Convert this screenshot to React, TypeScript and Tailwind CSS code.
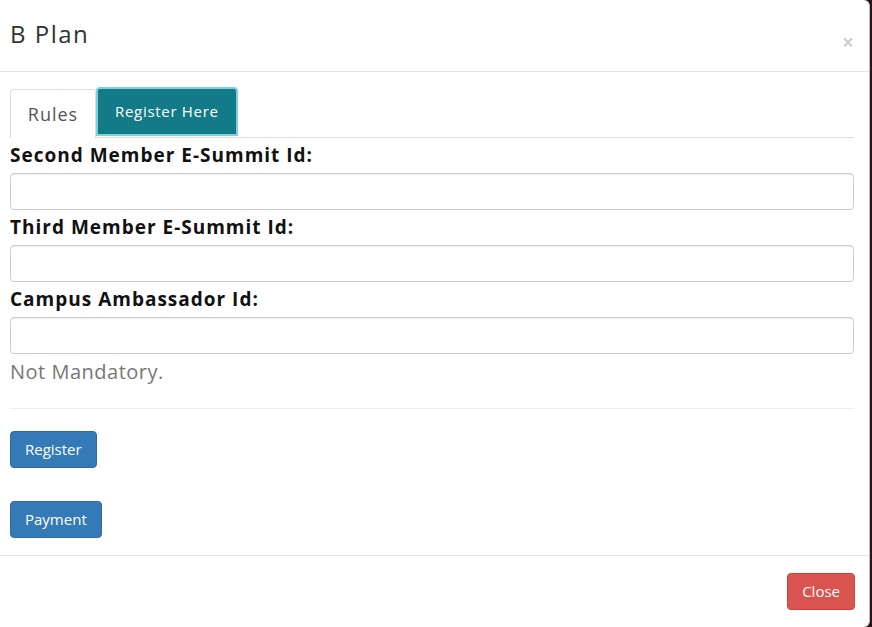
const fields = [
  { label: 'Second Member E-Summit Id:' },
  { label: 'Third Member E-Summit Id:' },
  { label: 'Campus Ambassador Id:' },
];

const App = () => {
  return (
    <div className="w-[872px] h-[627px] bg-[#2a1418] overflow-hidden font-['Open_Sans',sans-serif]">
      <div className="w-[870px] h-[627px] bg-white border-r border-[#bdbdbd] rounded-r-[6px] flex flex-col">
        {/* Header */}
        <div className="h-[72px] border-b border-[#e5e5e5] flex items-start justify-between pl-[10px] pr-[15px]">
          <h4 className="mt-[16px] text-[24px] text-[#333] tracking-[1.5px]">B Plan</h4>
          <span className="mt-[32px] text-[21px] font-bold leading-none text-black/20">×</span>
        </div>

        {/* Body */}
        <div className="px-[10px] pt-[16px] pr-[15px]">
          <div className="flex items-end border-b border-[#ddd] h-[50px]">
            <div className="h-[49px] w-[86px] border border-[#ddd] border-b-0 rounded-t-[4px] bg-white flex items-center justify-center text-[18px] tracking-[1px] text-[#555] -mb-px">
              Rules
            </div>
            <div className="h-[49px] mb-[1px] px-[17px] bg-[#137a87] border-2 border-[#7fd0dc] rounded-t-[4px] flex items-center text-[15px] tracking-[0.7px] text-white">
              Register Here
            </div>
          </div>

          {fields.map((f) => (
            <div key={f.label}>
              <label className="block mt-[5px] text-[19px] font-bold text-[#111] leading-[24px] tracking-[1px]">
                {f.label}
              </label>
              <div className="mt-[6px] h-[37px] border border-[#ccc] rounded-[4px] shadow-[inset_0_1px_1px_rgba(0,0,0,0.075)]" />
            </div>
          ))}

          <p className="mt-[5px] text-[20px] text-[#777] leading-[26px] tracking-[0.5px]">Not Mandatory.</p>

          <div className="mt-[23px] border-t border-[#eee]" />

          <button className="mt-[22px] block h-[37px] px-[14px] bg-[#337ab7] border border-[#2e6da4] rounded-[4px] text-white text-[15px]">
            Register
          </button>
          <button className="mt-[33px] block h-[37px] px-[14px] bg-[#337ab7] border border-[#2e6da4] rounded-[4px] text-white text-[15px]">
            Payment
          </button>
        </div>

        {/* Footer */}
        <div className="mt-[17px] border-t border-[#e5e5e5] flex justify-end pr-[14px] pt-[17px]">
          <button className="h-[37px] px-[14px] bg-[#d9534f] border border-[#d43f3a] rounded-[4px] text-white text-[15px]">
            Close
          </button>
        </div>
      </div>
    </div>
  );
};

export default App;
